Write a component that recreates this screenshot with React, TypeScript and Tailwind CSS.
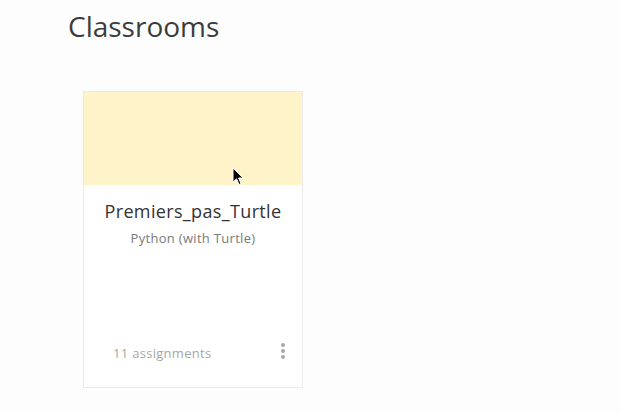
import React from "react";

const Kebab = () => (
  <svg width="6" height="18" viewBox="0 0 6 18" className="fill-[#a8a8a8]">
    <circle cx="3" cy="3" r="2" />
    <circle cx="3" cy="9" r="2" />
    <circle cx="3" cy="15" r="2" />
  </svg>
);

const Cursor = () => (
  <svg width="12" height="19" viewBox="0 0 12 19" className="absolute left-[148px] top-[75px]">
    <path d="M1 1 L1 15 L4.5 11.8 L7 17.5 L9 16.6 L6.6 11 L11 11 Z" fill="#000" stroke="#fff" strokeWidth="1" />
  </svg>
);

interface ClassroomCardProps {
  name: string;
  language: string;
  assignments: number;
}

const ClassroomCard = ({ name, language, assignments }: ClassroomCardProps) => {
  return (
    <div className="relative flex h-[297px] w-[220px] flex-col border border-[#ebebeb] bg-white font-['Open_Sans','Noto_Sans',sans-serif]">
      <div className="h-[93px] bg-[#fff3c9]" />
      <Cursor />
      <div className="flex flex-1 flex-col items-center pt-[14px]">
        <h3 className="text-[18px] leading-[24px] tracking-[0.35px] text-[#333]">{name}</h3>
        <p className="mt-[6px] text-[13px] leading-[18px] tracking-[0.3px] text-[#7a7a7a]">{language}</p>
      </div>
      <footer className="flex items-center justify-between pb-[26px] pl-[29px] pr-[16px]">
        <span className="translate-y-[2px] text-[13px] tracking-[0.3px] text-[#a6a6a6]">{assignments} assignments</span>
        <Kebab />
      </footer>
    </div>
  );
};

export default function App() {
  return (
    <div className="min-h-[413px] w-full bg-[#fdfdfd]">
      <div className="pl-[68px] pt-[8px]">
        <h1 className="font-['Open_Sans','Noto_Sans',sans-serif] text-[28px] leading-[36px] font-normal text-[#3c3c3c]">Classrooms</h1>
        <section className="flex gap-4 pl-[15px] pt-[47px]">
          <ClassroomCard name="Premiers_pas_Turtle" language="Python (with Turtle)" assignments={11} />
        </section>
      </div>
    </div>
  );
}
